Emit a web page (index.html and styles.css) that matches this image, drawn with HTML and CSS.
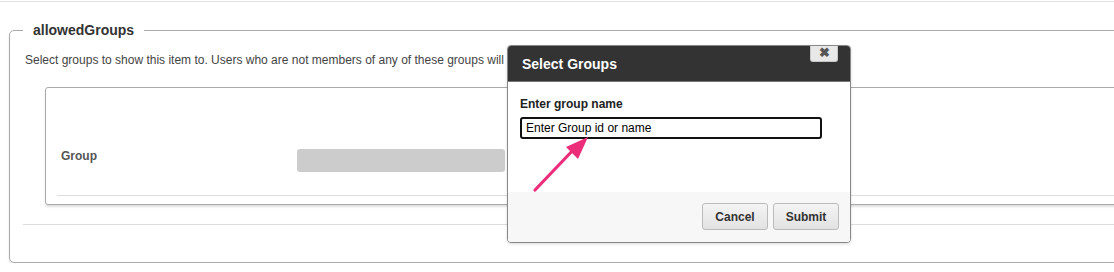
FILE: index.html
```html
<!DOCTYPE html>
<html lang="en">

<head>
    <meta charset="UTF-8">
    <meta name="viewport" content="width=device-width, initial-scale=1.0">
    <title>allowedGroups</title>
    <link rel="stylesheet" href="styles.css">
</head>

<body>
    <div class="topbar"></div>
    <fieldset class="field">
        <legend>allowedGroups</legend>
        <p class="help">Select groups to show this item to. Users who are not members of any of these groups will</p>
        <div class="panel">
            <div class="group-row">
                <span class="group-label">Group</span>
                <span class="group-bar"></span>
            </div>
        </div>
        <div class="field-foot"></div>
    </fieldset>

    <div class="dialog">
        <div class="dialog-head">
            Select Groups
            <span class="close">&#10006;</span>
        </div>
        <div class="dialog-body">
            <label for="groupName">Enter group name</label>
            <input type="text" id="groupName" value="Enter Group id or name">
        </div>
        <div class="dialog-foot">
            <button type="button">Cancel</button>
            <button type="button">Submit</button>
        </div>
    </div>

    <svg class="pointer" width="70" height="70" viewBox="0 0 70 70">
        <line x1="5" y1="60" x2="46" y2="17" stroke="#ec2d7a" stroke-width="3.2" stroke-linecap="round"/>
        <polygon points="58,7 36,17 48,29" fill="#ec2d7a"/>
    </svg>
</body>
</html>
```

FILE: styles.css
```css
body {
    font-family: "Liberation Sans", Arial, sans-serif;
    margin: 0;
    padding: 0;
    background-color: #ffffff;
    color: #444;
    overflow: hidden;
}

.topbar {
    height: 1px;
    border-bottom: 1px solid #e4e4e4;
}

.field {
    width: 1300px;
    margin: 20px 0 0 9px;
    padding: 0 13px 37px 13px;
    border: 1px solid #aaa;
    border-radius: 5px;
    box-shadow: 0 2px 2px rgba(0, 0, 0, 0.12);
}

.field legend {
    padding: 0 10px;
    font-size: 14px;
    font-weight: bold;
    line-height: 17px;
    color: #333;
}

.help {
    margin: 14px 0 0 2px;
    font-size: 12px;
    line-height: 14px;
}

.panel {
    margin: 20px 0 0 22px;
    padding: 0 0 8px 11px;
    border: 1px solid #aaa;
    border-radius: 3px;
    box-shadow: 0 2px 2px rgba(0, 0, 0, 0.12);
}

.group-row {
    display: flex;
    align-items: flex-start;
    margin-top: 61px;
    padding-bottom: 23px;
    border-bottom: 1px solid #ddd;
}

.group-label {
    width: 236px;
    padding-left: 4px;
    font-size: 12px;
    font-weight: bold;
    line-height: 14px;
    color: #555;
}

.group-bar {
    width: 208px;
    height: 23px;
    background-color: #ccc;
    border-radius: 3px;
}

.field-foot {
    margin-top: 19px;
    border-top: 1px solid #ddd;
}

/* popup over the form */
.dialog {
    position: absolute;
    left: 507px;
    top: 45px;
    width: 342px;
    border: 1px solid #888;
    border-radius: 4px;
    background-color: #fff;
    overflow: hidden;
    box-shadow: 0 1px 3px rgba(0, 0, 0, 0.15);
}

.dialog-head {
    position: relative;
    height: 35px;
    padding-left: 14px;
    background-color: #333;
    border-bottom: 1px solid #777;
    color: #fff;
    font-size: 14px;
    font-weight: bold;
    line-height: 37px;
}

.close {
    position: absolute;
    top: -1px;
    right: 12px;
    width: 26px;
    height: 16px;
    background-color: #e8e8e8;
    border: 1px solid #c8c8c8;
    border-top: none;
    border-radius: 0 0 3px 3px;
    color: #555;
    font-size: 13px;
    line-height: 15px;
    text-align: center;
}

.dialog-body {
    height: 95px;
    padding: 15px 0 0 12px;
}

.dialog-body label {
    display: block;
    margin-bottom: 6px;
    font-size: 12px;
    font-weight: bold;
    line-height: 14px;
    color: #222;
}

.dialog-body input {
    box-sizing: border-box;
    width: 302px;
    height: 22px;
    padding: 0 4px;
    border: 2px solid #111;
    border-radius: 3px;
    font-family: "Liberation Sans", Arial, sans-serif;
    font-size: 12px;
    color: #000;
    outline: none;
}

.dialog-foot {
    display: flex;
    justify-content: flex-end;
    gap: 5px;
    height: 39px;
    padding: 11px 11px 0 0;
    background-color: #f7f7f7;
}

.dialog-foot button {
    width: 66px;
    height: 27px;
    padding: 0;
    background: linear-gradient(#f4f4f4, #e2e2e2);
    border: 1px solid #bbb;
    border-radius: 3px;
    font-family: "Liberation Sans", Arial, sans-serif;
    font-size: 12px;
    font-weight: bold;
    color: #333;
}

.pointer {
    position: absolute;
    left: 530px;
    top: 130px;
}
```
